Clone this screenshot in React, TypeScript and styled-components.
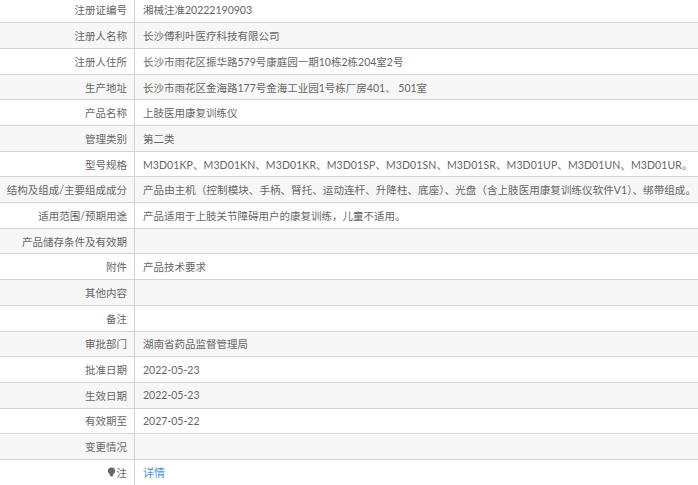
import React from 'react'
import styled, { createGlobalStyle } from 'styled-components'

const Global = createGlobalStyle`
	html, body {
		margin: 0;
		padding: 0;
		height: 485px;
		overflow: hidden;
		background: #fff;
	}
`

const Table = styled.div`
	display: flex;
	flex-direction: column;
	width: 698px;
	margin-top: -2.4px;
	font-family: Lato, "Noto Sans CJK SC", sans-serif;
	font-size: 10.5px;
	color: #666;
`

const Row = styled.div<{ $shaded: boolean }>`
	display: grid;
	grid-template-columns: 135px 1fr;
	box-sizing: border-box;
	height: 25.7px;
	flex: none;
	align-items: stretch;
	border-bottom: 1px solid #d4d4d4;
	background: ${(p) => (p.$shaded ? '#f7f7f7' : '#fff')};
`

const Label = styled.div`
	display: flex;
	align-items: center;
	justify-content: flex-end;
	padding-right: 7px;
	border-right: 1px solid #d4d4d4;
	white-space: nowrap;
`

const Value = styled.div<{ $tracking?: number }>`
	display: flex;
	align-items: center;
	padding-left: 8px;
	white-space: pre;
	letter-spacing: ${(p) => p.$tracking ?? 0}px;
`

const DetailLink = styled.a`
	color: #4a94dc;
	font-size: 11px;
	text-decoration: none;
`

const Bulb = styled.svg`
	width: 9px;
	height: 10px;
	margin-right: 1px;
	color: #666;
`

const rows: { label: string; value: string; tracking?: number }[] = [
	{ label: '注册证编号', value: '湘械注准20222190903' },
	{ label: '注册人名称', value: '长沙傅利叶医疗科技有限公司' },
	{ label: '注册人住所', value: '长沙市雨花区振华路579号康庭园一期10栋2栋204室2号' },
	{ label: '生产地址', value: '长沙市雨花区金海路177号金海工业园1号栋厂房401、 501室' },
	{ label: '产品名称', value: '上肢医用康复训练仪' },
	{ label: '管理类别', value: '第二类' },
	{ label: '型号规格', value: 'M3D01KP、M3D01KN、M3D01KR、M3D01SP、M3D01SN、M3D01SR、M3D01UP、M3D01UN、M3D01UR。', tracking: 0.1 },
	{ label: '结构及组成/主要组成成分', value: '产品由主机（控制模块、手柄、臂托、运动连杆、升降柱、底座）、光盘（含上肢医用康复训练仪软件V1）、绑带组成。', tracking: 0.08 },
	{ label: '适用范围/预期用途', value: '产品适用于上肢关节障碍用户的康复训练，儿童不适用。' },
	{ label: '产品储存条件及有效期', value: '' },
	{ label: '附件', value: '产品技术要求' },
	{ label: '其他内容', value: '' },
	{ label: '备注', value: '' },
	{ label: '审批部门', value: '湖南省药品监督管理局' },
	{ label: '批准日期', value: '2022-05-23' },
	{ label: '生效日期', value: '2022-05-23' },
	{ label: '有效期至', value: '2027-05-22' },
	{ label: '变更情况', value: '' },
]

export default function App() {
	return (
		<Table>
			<Global />
			{ rows.map(({ label, value, tracking }, i) => (
				<Row key={ label } $shaded={ i % 2 === 1 }>
					<Label>{ label }</Label>
					<Value $tracking={ tracking }>{ value }</Value>
				</Row>
			)) }
			<Row $shaded={ false }>
				<Label>
					<Bulb viewBox="0 0 9 11">
						<path fill="currentColor" d="M4.5 0.5a4 4 0 0 1 4 4c0 1.8-1.2 2.7-2 3.6L5.6 10.5H3.4L2.5 8.1C1.7 7.2.5 6.3.5 4.5a4 4 0 0 1 4-4z" />
					</Bulb>
					注
				</Label>
				<Value><DetailLink href="#">详情</DetailLink></Value>
			</Row>
		</Table>
	)
}
